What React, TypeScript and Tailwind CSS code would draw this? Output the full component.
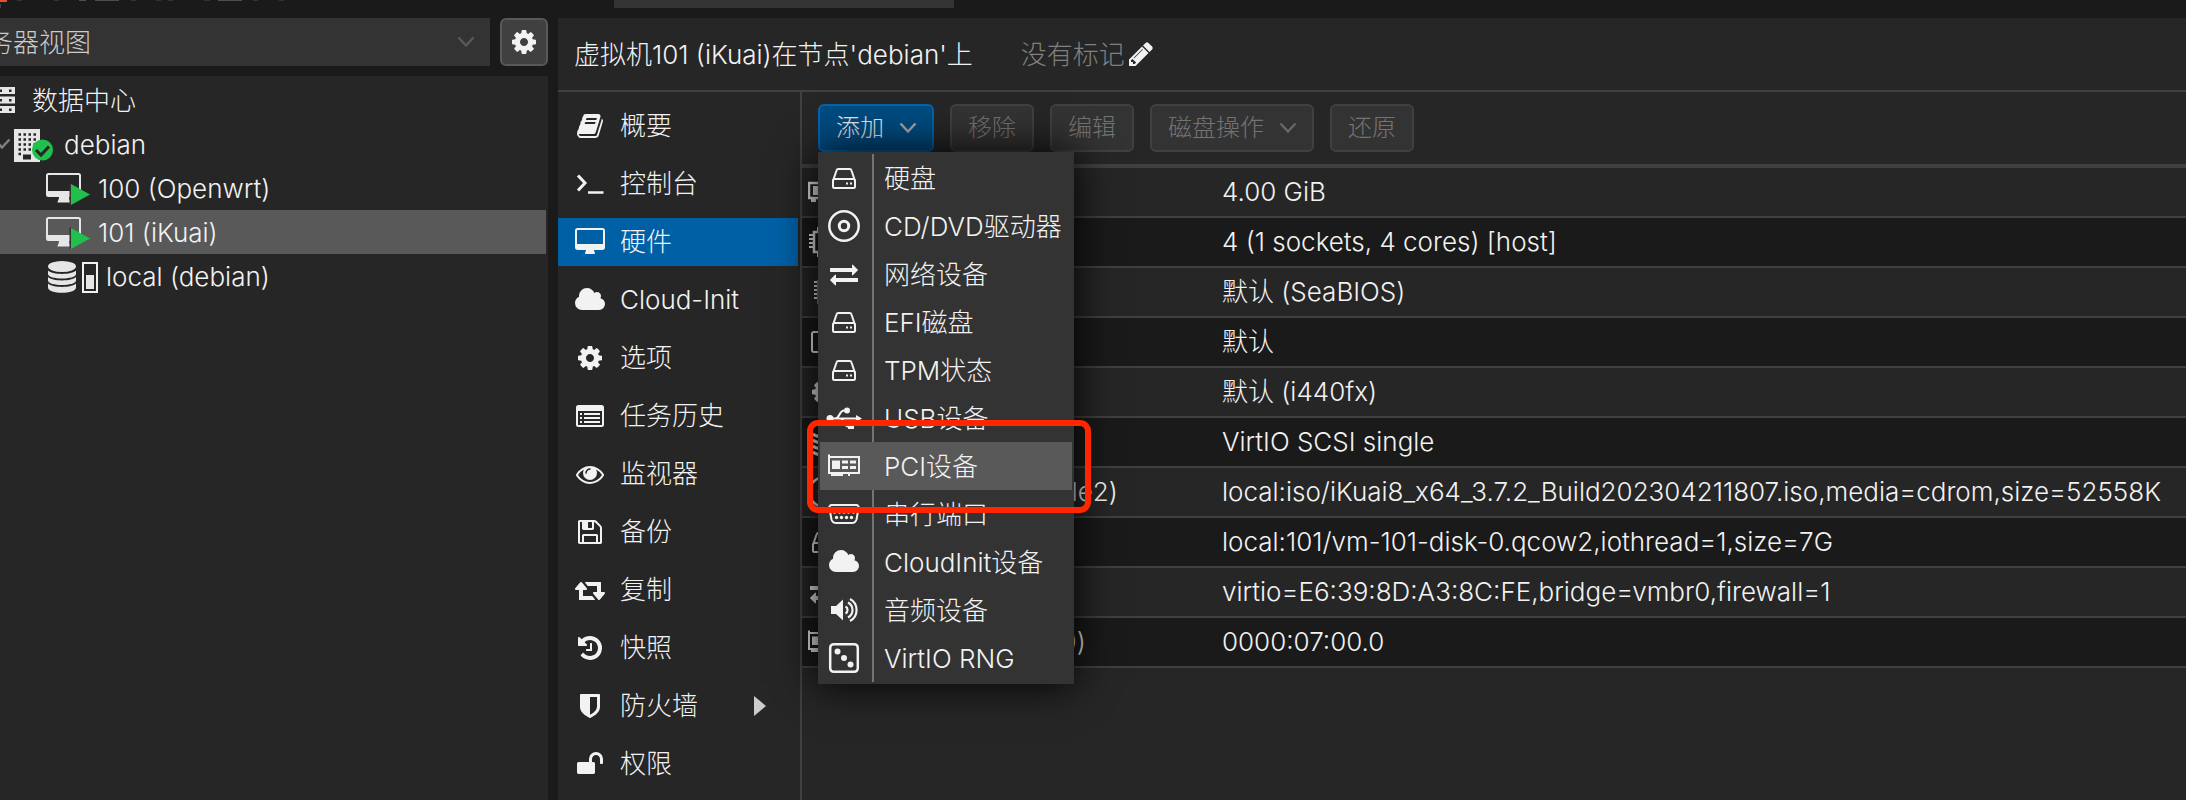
import type { ReactNode } from "react";

const COG =
  "M1152 896q0-106-75-181t-181-75-181 75-75 181 75 181 181 75 181-75 75-181zm512-109v222q0 12-8 23t-20 13l-185 28q-19 54-39 91 35 50 107 138 10 12 10 25t-9 23q-27 37-99 108t-94 71q-12 0-26-9l-138-108q-44 23-91 38-16 136-29 186-7 28-36 28h-222q-14 0-24.5-8.5t-11.5-21.5l-28-184q-49-16-90-37l-141 107q-10 9-25 9-14 0-25-11-126-114-165-168-7-10-7-23 0-12 8-23 15-21 51-66.500t54-70.500q-27-50-41-99l-183-27q-13-2-21-12.500t-8-23.500v-222q0-12 8-23t19-13l186-28q14-46 39-92-40-57-107-138-10-12-10-24 0-10 9-23 26-36 98.500-107.500t94.500-71.500q13 0 26 10l138 107q44-23 91-38 16-136 29-186 7-28 36-28h222q14 0 24.500 8.500t11.500 21.500l28 184q49 16 90 37l142-107q9-9 24-9 13 0 25 10 129 119 165 170 7 8 7 22 0 12-8 23-15 21-51 66.500t-54 70.500q26 50 41 98l183 28q13 2 21 12.500t8 23.500z";
const BOOK =
  "M1703 478q40 57 18 129l-275 906q-19 64-76.500 107.500t-122.500 43.500h-923q-77 0-148.500-53.500t-99.500-131.500q-24-67-2-127 0-4 3-27t4-37q1-8-3-21.500t-3-19.500q2-11 8-21t16.500-23.500 16.500-23.500q23-38 45-91.500t30-91.500q3-10 .5-30t-.5-28q3-11 17-28t17-23q21-36 42-92t25-90q1-9-2.500-32t.5-28q4-13 22-30.500t22-22.500q19-26 42.500-84.500t27.500-96.500q1-8-3-25.500t-2-26.500q2-8 9-18t18-23 17-21q8-12 16.500-30.500t15-35 16-36 19.500-32 26.500-23.500 36-11.500 47.500 5.500l-1 3q38-9 51-9h761q74 0 114 56t18 130l-274 906q-36 119-71.500 153.500t-128.500 34.500h-869q-27 0-38 15-11 16-1 43 24 70 144 70h923q29 0 56-15.500t35-41.500l300-987q7-22 5-57 38 15 59 43zm-1064 2q-4 13 2 22.500t20 9.500h608q13 0 25.500-9.500t16.500-22.500l21-64q4-13-2-22.500t-20-9.500h-608q-13 0-25.500 9.500t-16.500 22.500zm-83 256q-4 13 2 22.500t20 9.500h608q13 0 25.500-9.500t16.500-22.500l21-64q4-13-2-22.500t-20-9.500h-608q-13 0-25.500 9.500t-16.500 22.500z";
const DESKTOP =
  "M1856 992v-832q0-13-9.500-22.500t-22.500-9.500h-1600q-13 0-22.500 9.500t-9.500 22.500v832q0 13 9.500 22.500t22.500 9.500h1600q13 0 22.500-9.500t9.500-22.500zm128-832v1088q0 66-47 113t-113 47h-544q0 37 16 77.500t32 71 16 43.500q0 26-19 45t-45 19h-512q-26 0-45-19t-19-45q0-14 16-44t32-70 16-78h-544q-66 0-113-47t-47-113v-1088q0-66 47-113t113-47h1600q66 0 113 47t47 113z";
const CLOUD =
  "M1984 1152q0 159-112.500 271.500t-271.500 112.500h-1088q-185 0-316.500-131.500t-131.500-316.500q0-132 71-241.500t187-163.500q-2-28-2-43 0-212 150-362t362-150q158 0 286.500 88t187.500 230q70-62 166-62 106 0 181 75t75 181q0 75-41 138 129 30 213 134.500t84 239.500z";
const EYE =
  "M1664 960q-152-236-381-353 61 104 61 225 0 185-131.500 316.500t-316.500 131.500-316.500-131.500-131.500-316.500q0-121 61-225-229 117-381 353 133 205 333.500 326.500t434.500 121.500 434.500-121.500 333.500-326.500zm-720-384q0-20-14-34t-34-14q-125 0-214.500 89.500t-89.500 214.500q0 20 14 34t34 14 34-14 14-34q0-86 61-147t147-61q20 0 34-14t14-34zm848 384q0 34-20 69-140 230-376.500 368.500t-499.500 138.500-499.500-139-376.500-368q-20-35-20-69t20-69q140-229 376.500-368t499.500-139 499.500 139 376.500 368q20 35 20 69z";
const SAVE =
  "M512 1536h768v-384h-768v384zm896 0h128v-896q0-14-10-38.500t-20-34.500l-281-281q-10-10-34-20t-39-10v416q0 40-28 68t-68 28h-576q-40 0-68-28t-28-68v-416h-128v1280h128v-416q0-40 28-68t68-28h832q40 0 68 28t28 68v416zm-384-928v-320q0-13-9.500-22.500t-22.500-9.500h-192q-13 0-22.500 9.500t-9.500 22.500v320q0 13 9.500 22.500t22.500 9.500h192q13 0 22.500-9.500t9.500-22.500zm640 32v928q0 40-28 68t-68 28h-1344q-40 0-68-28t-28-68v-1344q0-40 28-68t68-28h928q40 0 88 20t76 48l280 280q28 28 48 76t20 88z";
const RETWEET =
  "M1280 1504q0 13-9.500 22.500t-22.500 9.500h-960q-8 0-13.500-2t-9-7-5.500-8-3-11.500-1-11.500v-600h-192q-26 0-45-19t-19-45q0-24 15-41l320-384q19-22 49-22t49 22l320 384q15 17 15 41 0 26-19 45t-45 19h-192v384h576q16 0 25 11l160 192q7 11 7 21zm640-416q0 24-15 41l-320 384q-20 23-49 23t-49-23l-320-384q-15-17-15-41 0-26 19-45t45-19h192v-384h-576q-16 0-25-12l-160-192q-7-9-7-20 0-13 9.500-22.500t22.500-9.500h960q8 0 13.500 2t9 7 5.500 8 3 11.500 1 11.500v600h192q26 0 45 19t19 45z";
const HISTORY =
  "M1664 896q0 156-61 298t-164 245-245 164-298 61q-172 0-327-72.500t-264-204.500q-7-10-6.500-22.500t8.500-20.500l137-138q10-9 25-9 16 2 23 12 73 95 179 147t225 52q104 0 198.500-40.500t163.500-109.500 109.500-163.500 40.500-198.500-40.500-198.500-109.500-163.500-163.500-109.500-198.500-40.500q-98 0-188 35.500t-160 101.500l137 138q31 30 14 69-17 40-59 40h-448q-26 0-45-19t-19-45v-448q0-42 40-59 39-17 69 14l130 129q107-101 244.500-156.500t284.500-55.500q156 0 298 61t245 164 164 245 61 298zm-640-288v448q0 14-9 23t-23 9h-320q-14 0-23-9t-9-23v-64q0-14 9-23t23-9h224v-352q0-14 9-23t23-9h64q14 0 23 9t9 23z";
const SHIELD =
  "M1344 960v-640h-448v1137q119-63 213-137 235-184 235-360zm192-768v768q0 86-33.500 170.500t-83 150-118 127.500-126.500 103-121 77.500-89.500 49.500-42.500 20q-12 6-26 6t-26-6q-16-7-42.500-20t-89.500-49.500-121-77.500-126.500-103-118-127.500-83-150-33.500-170.500v-768q0-26 19-45t45-19h1152q26 0 45 19t19 45z";
const UNLOCK =
  "M1728 576v256q0 26-19 45t-45 19h-64q-26 0-45-19t-19-45v-256q0-106-75-181t-181-75-181 75-75 181v192h96q40 0 68 28t28 68v576q0 40-28 68t-68 28h-960q-40 0-68-28t-28-68v-576q0-40 28-68t68-28h672v-192q0-185 131.500-316.500t316.500-131.500 316.500 131.500 131.500 316.500z";
const PENCIL =
  "M491 1536l91-91-235-235-91 91v107h128v128h107zm523-928q0-22-22-22-10 0-17 7l-542 542q-7 7-7 17 0 22 22 22 10 0 17-7l542-542q7-7 7-17zm-54-192l416 416-832 832h-416v-416zm683 96q0 53-37 90l-166 166-416-416 166-165q36-38 90-38 53 0 91 38l235 234q37 39 37 91z";
const EXCHANGE =
  "M1792 1184v192q0 13-9.500 22.500t-22.500 9.500h-1376v192q0 13-9.500 22.500t-22.500 9.500q-12 0-24-10l-319-320q-9-9-9-22 0-14 9-23l320-320q9-9 23-9 13 0 22.500 9.500t9.500 22.500v192h1376q13 0 22.500 9.500t9.500 22.500zm0-544q0 14-9 23l-320 320q-9 9-23 9-13 0-22.500-9.500t-9.500-22.500v-192h-1376q-13 0-22.500-9.500t-9.500-22.500v-192q0-13 9.500-22.500t22.500-9.500h1376v-192q0-14 9-23t23-9q12 0 24 10l319 319q9 9 9 23z";

/* Glyph on the 1792-unit grid; wide ones use a 1920-unit box starting at `left`. */
function Glyph({ d, wide = false, left = 0 }: { d: string; wide?: boolean; left?: number }) {
  return (
    <svg
      viewBox={`${left} 0 ${wide ? 1920 : 1792} 1792`}
      className={wide ? "h-7 w-[30px] shrink-0" : "size-7 shrink-0"}
      fill="currentColor"
      aria-hidden="true"
    >
      <path d={d} />
    </svg>
  );
}

function Svg32({ children }: { children: ReactNode }) {
  return (
    <svg viewBox="0 0 32 32" className="size-8 shrink-0" fill="none" stroke="currentColor" aria-hidden="true">
      {children}
    </svg>
  );
}

function Chevron() {
  return (
    <svg viewBox="0 0 20 20" className="size-5 shrink-0" fill="none" stroke="currentColor" strokeWidth="2.500" aria-hidden="true">
      <path d="M2.500 5.500 10 13.500l7.500-8" />
    </svg>
  );
}

const terminal = (
  <Svg32>
    <path d="M4 7.500 11 15l-7 7.500" strokeWidth="3" />
    <path d="M14 24.500h15.500" strokeWidth="2.500" />
  </Svg32>
);
const listAlt = (
  <svg viewBox="0 0 28 28" className="size-7 shrink-0" fill="currentColor" aria-hidden="true">
    <path fillRule="evenodd" d="M2.500 3h23A2.500 2.500 0 0 1 28 5.500v17a2.500 2.500 0 0 1-2.500 2.500h-23A2.500 2.500 0 0 1 0 22.500v-17A2.500 2.500 0 0 1 2.500 3zM2 9v13.500a.5.500 0 0 0 .5.500h23a.5.500 0 0 0 .5-.5V9z" />
    <path d="M4 11h2v2H4zM4 15h2v2H4zM4 19h2v2H4zM8 11h16v2H8zM8 15h16v2H8zM8 19h16v2H8z" />
  </svg>
);
const hdd = (
  <Svg32>
    <path d="M5 18.500v6a1.500 1.500 0 0 0 1.500 1.500h19a1.500 1.500 0 0 0 1.500-1.500v-6a1.500 1.500 0 0 0-1.500-1.500h-19A1.500 1.500 0 0 0 5 18.500zM5.300 18 8.500 8.500A2 2 0 0 1 10.500 7h11a2 2 0 0 1 2 1.500L26.700 18" strokeWidth="2" />
    <path d="M18 20.500h2v2h-2zM22 20.500h2v2h-2z" fill="currentColor" stroke="none" />
  </Svg32>
);
const disc = (
  <Svg32>
    <circle cx="16" cy="16" r="14.700" strokeWidth="2.500" />
    <circle cx="16" cy="16" r="4.700" strokeWidth="3" />
  </Svg32>
);
const usb = (
  <svg viewBox="0 0 36 32" className="h-8 w-9 shrink-0" fill="none" stroke="currentColor" aria-hidden="true">
    <path d="M4 16.500h27M9 16.500c5 0 4-8 9-8h4M14 16.500c5 0 4 8 8 8h4" strokeWidth="2" />
    <circle cx="4" cy="16.500" r="3.500" fill="currentColor" stroke="none" />
    <circle cx="21" cy="8.500" r="3" fill="currentColor" stroke="none" />
    <path d="M30 13l6 3.500-6 3.500zM22 22h6v5h-6z" fill="currentColor" stroke="none" />
  </svg>
);
const card = (
  <Svg32>
    <path d="M1 4.500V24M1 7h30v16H1" strokeWidth="2" />
    <path d="M4 10.500h8v8.500H4zM14 10.500h6v3h-6zM22 10.500h6v3h-6zM14 16h6v3h-6zM22 16h6v3h-6zM3 24h12v2H3zM20 24h2v2h-2z" fill="currentColor" stroke="none" />
  </Svg32>
);
const serial = (
  <Svg32>
    <path d="M4 7h24a2.500 2.500 0 0 1 2.500 3.500l-2 11a5 5 0 0 1-5 3.500h-15a5 5 0 0 1-5-3.500l-2-11A2.500 2.500 0 0 1 4 7z" strokeWidth="2" />
    <g fill="currentColor" stroke="none">
      <circle cx="6.500" cy="14" r="1.700" />
      <circle cx="11.500" cy="14" r="1.700" />
      <circle cx="16" cy="14" r="1.700" />
      <circle cx="20.500" cy="14" r="1.700" />
      <circle cx="25.500" cy="14" r="1.700" />
      <circle cx="8.500" cy="19.500" r="1.700" />
      <circle cx="13.500" cy="19.500" r="1.700" />
      <circle cx="18.500" cy="19.500" r="1.700" />
      <circle cx="23.500" cy="19.500" r="1.700" />
    </g>
  </Svg32>
);
const volume = (
  <Svg32>
    <path d="M3 12h5l7-6.500v21L8 20H3z" fill="currentColor" stroke="none" />
    <path d="M17.500 12.500a4 4 0 0 1 0 7M20 8.500a8.500 8.500 0 0 1 0 15M22 5a12.500 12.500 0 0 1 0 22" strokeWidth="2.200" />
  </Svg32>
);
const dice = (
  <Svg32>
    <rect x="2.200" y="2.200" width="27.600" height="27.600" rx="3.500" strokeWidth="2.500" />
    <g fill="currentColor" stroke="none">
      <circle cx="9.500" cy="9.500" r="3" />
      <circle cx="16" cy="16" r="3" />
      <circle cx="22.500" cy="22.500" r="3" />
    </g>
  </Svg32>
);
const memory = (
  <Svg32>
    <path d="M1 7h30v15H1z" strokeWidth="2.500" />
    <path d="M5 10h8v9H5zM17 10h8v9h-8zM3 22h5v4H3zM12 22h5v4h-5zM21 22h5v4h-5z" fill="currentColor" stroke="none" />
  </Svg32>
);
const cpu = (
  <Svg32>
    <rect x="6" y="6" width="20" height="20" strokeWidth="2.500" />
    <path d="M1 9h4M1 13h4M1 17h4M1 21h4M27 9h4M27 13h4M27 17h4M27 21h4M10 1v4M16 1v4M22 1v4M10 27v4M16 27v4M22 27v4" strokeWidth="2" />
  </Svg32>
);
const microchip = (
  <Svg32>
    <path d="M10 4h12v24H10z" fill="currentColor" />
    <path d="M6 6h3M6 10h3M6 14h3M6 18h3M6 22h3M23 6h3M23 10h3M23 14h3M23 18h3M23 22h3" strokeWidth="2" />
  </Svg32>
);
const display = (
  <Svg32>
    <rect x="4" y="6" width="24" height="20" rx="2" strokeWidth="2" />
  </Svg32>
);
const stack = (
  <Svg32>
    <path d="M5 8c5 4 17 4 22 0M5 14c5 4 17 4 22 0M5 20c5 4 17 4 22 0M5 26c5 4 17 4 22 0" strokeWidth="3" />
  </Svg32>
);

const navItems: { label: string; icon: ReactNode; active?: boolean; more?: boolean }[] = [
  { label: "概要", icon: <Glyph d={BOOK} /> },
  { label: "控制台", icon: terminal },
  { label: "硬件", icon: <Glyph d={DESKTOP} wide left={64} />, active: true },
  { label: "Cloud-Init", icon: <Glyph d={CLOUD} wide left={64} /> },
  { label: "选项", icon: <Glyph d={COG} /> },
  { label: "任务历史", icon: listAlt },
  { label: "监视器", icon: <Glyph d={EYE} /> },
  { label: "备份", icon: <Glyph d={SAVE} /> },
  { label: "复制", icon: <Glyph d={RETWEET} wide /> },
  { label: "快照", icon: <Glyph d={HISTORY} /> },
  { label: "防火墙", icon: <Glyph d={SHIELD} />, more: true },
  { label: "权限", icon: <Glyph d={UNLOCK} /> },
];

const menuItems: { label: string; icon: ReactNode; active?: boolean }[] = [
  { label: "硬盘", icon: hdd },
  { label: "CD/DVD驱动器", icon: disc },
  { label: "网络设备", icon: <Glyph d={EXCHANGE} /> },
  { label: "EFI磁盘", icon: hdd },
  { label: "TPM状态", icon: hdd },
  { label: "USB设备", icon: usb },
  { label: "PCI设备", icon: card, active: true },
  { label: "串行端口", icon: serial },
  { label: "CloudInit设备", icon: <Glyph d={CLOUD} wide left={64} /> },
  { label: "音频设备", icon: volume },
  { label: "VirtIO RNG", icon: dice },
];

const hardware: { name: string; value: string; icon: ReactNode }[] = [
  { name: "内存", value: "4.00 GiB", icon: memory },
  { name: "处理器", value: "4 (1 sockets, 4 cores) [host]", icon: cpu },
  { name: "BIOS", value: "默认 (SeaBIOS)", icon: microchip },
  { name: "显示", value: "默认", icon: display },
  { name: "机器", value: "默认 (i440fx)", icon: <Glyph d={COG} /> },
  { name: "SCSI控制器", value: "VirtIO SCSI single", icon: stack },
  {
    name: "CD/DVD驱动器 (ide2)",
    value: "local:iso/iKuai8_x64_3.7.2_Build202304211807.iso,media=cdrom,size=52558K",
    icon: disc,
  },
  { name: "硬盘 (scsi0)", value: "local:101/vm-101-disk-0.qcow2,iothread=1,size=7G", icon: hdd },
  { name: "网络设备 (net0)", value: "virtio=E6:39:8D:A3:8C:FE,bridge=vmbr0,firewall=1", icon: <Glyph d={EXCHANGE} /> },
  { name: "PCI设备 (hostpci0)", value: "0000:07:00.0", icon: card },
];

function VmIcon() {
  return (
    <svg viewBox="0 0 46 36" className="h-9 w-[46px] shrink-0" aria-hidden="true">
      <path
        fill="#e6e6e6"
        fillRule="evenodd"
        d="M2.500 3h30A2.500 2.500 0 0 1 35 5.500v19a2.500 2.500 0 0 1-2.500 2.500H23c0 2.500 1.500 4 1.500 5.500H11.500c0-1.500 1.500-3 1.500-5.500H2.500A2.500 2.500 0 0 1 0 24.500v-19A2.500 2.500 0 0 1 2.500 3zM2 5.500V21h31V5.500a.5.500 0 0 0-.5-.5h-30a.5.500 0 0 0-.5.500z"
      />
      <path fill="#333333" d="M23.500 13.500h2v21h-2z" />
      <path fill="#21bf4b" d="M25 14l19 10.500L25 35z" />
    </svg>
  );
}

function StorageIcon() {
  return (
    <svg viewBox="0 0 54 36" className="h-9 w-[54px] shrink-0" fill="#e6e6e6" aria-hidden="true">
      <ellipse cx="16" cy="8.500" rx="14" ry="5.500" />
      <path d="M2 12.500c4 4.500 24 4.500 28 0v3.500c0 6-28 6-28 0zM2 19c4 4.500 24 4.500 28 0v3.500c0 6-28 6-28 0zM2 25.500c4 4.500 24 4.500 28 0V29.500c0 7-28 7-28 0z" />
      <rect x="37" y="5" width="14" height="29" fill="none" stroke="#f2f2f2" strokeWidth="2" />
      <path d="M40 17h8v14h-8z" />
    </svg>
  );
}

function Sidebar() {
  const row = "flex h-11 w-full items-center text-left whitespace-nowrap";
  return (
    <aside className="-ml-12 flex w-[596px] shrink-0 flex-col">
      <div className="flex gap-[10px]">
        <label className="relative flex flex-1 items-center bg-[#333333]">
          <span className="sr-only">视图</span>
          <select className="h-12 w-full appearance-none bg-[#333333] pt-[2px] pl-[9px] text-[26px] font-light text-[#cccccc]">
            <option>服务器视图</option>
          </select>
          <span className="pointer-events-none absolute right-[14px] text-[#595959]">
            <Chevron />
          </span>
        </label>
        <button
          type="button"
          aria-label="设置"
          className="flex h-12 w-12 items-center justify-center rounded-md border-2 border-[#595959] bg-[#404040]"
        >
          <Glyph d={COG} />
        </button>
      </div>
      <div className="mt-[10px] flex-1 bg-[#262626] pt-[2px] pr-[2px]">
        <button type="button" className={`${row} gap-4 pl-8`}>
          <svg viewBox="0 0 32 32" className="size-8 shrink-0" fill="#e6e6e6" aria-hidden="true">
            <path
              fillRule="evenodd"
              d="M5 3h26v7H5zM5 12.500h26v7H5zM5 22h26v7H5zM25 5.500v2.500h2.500V5.500zM25 15v2.500h2.500V15zM25 24.500V27h2.500v-2.500zM9 5.500V8h9V5.500zM9 15v2.500h9V15zM9 24.500V27h9v-2.500z"
            />
          </svg>
          <span className="pt-[2px]">数据中心</span>
        </button>
        <button type="button" className={`${row} gap-[2px] pl-10`}>
          <span className="text-[#808080]">
            <Chevron />
          </span>
          <svg viewBox="0 0 40 36" className="h-9 w-10 shrink-0" aria-hidden="true">
            <path fill="#e6e6e6" d="M0 3h26v33H0z" />
            <path
              stroke="#262626"
              strokeWidth="2.500"
              strokeDasharray="2.500 2.500"
              d="M4.500 8.500h18M4.500 13.500h18M4.500 18.500h18M4.500 23.500h18M4.500 28h3"
            />
            <path fill="#262626" d="M9 28.500h8v5H9z" />
            <circle cx="28.500" cy="24" r="10.500" fill="#21bf4b" />
            <path d="M22 24l5 5 8-8.500" fill="none" stroke="#262626" strokeWidth="3" />
          </svg>
          <span className="pt-[2px] pl-2">debian</span>
        </button>
        <button type="button" className={`${row} gap-[6px] pl-[94px]`}>
          <VmIcon />
          <span className="pt-[2px]">100 (Openwrt)</span>
        </button>
        <button type="button" className={`${row} gap-[6px] bg-[#595959] pl-[94px]`}>
          <VmIcon />
          <span className="pt-[2px]">101 (iKuai)</span>
        </button>
        <button type="button" className={`${row} gap-[6px] pl-[94px]`}>
          <StorageIcon />
          <span className="pt-[2px]">local (debian)</span>
        </button>
      </div>
    </aside>
  );
}

function AddMenu() {
  return (
    <div
      role="menu"
      className="absolute top-full -left-[2px] z-10 w-64 border-2 border-[#333333] bg-[#333333] text-[26px] text-[#f2f2f2] shadow-[0_0_40px_#000000]"
    >
      {menuItems.map((item) => (
        <div key={item.label} className={item.active ? "relative bg-[#595959]" : ""}>
          <button type="button" role="menuitem" className="flex h-12 w-full items-center text-left whitespace-nowrap">
            <span
              className={
                item.active
                  ? "flex h-full w-[54px] items-center justify-center border-r-2 border-transparent pr-1"
                  : "flex h-full w-[54px] items-center justify-center border-r-2 border-[#737373] pr-1"
              }
            >
              {item.icon}
            </span>
            <span className="pt-[2px] pl-[10px]">{item.label}</span>
          </button>
          {item.active && (
            <div className="pointer-events-none absolute -top-[22px] -right-[19px] -bottom-[23px] -left-[13px] rounded-[11px] border-[6px] border-[#ff2600]" />
          )}
        </div>
      ))}
    </div>
  );
}

function Toolbar() {
  const disabled = "flex h-12 items-center rounded-md border-2 border-[#404040] bg-[#333333] text-[#737373]";
  return (
    <div className="flex gap-4 border-b-4 border-[#404040] px-4 py-3 text-2xl">
      <div className="relative">
        <button
          type="button"
          aria-haspopup="menu"
          aria-expanded="true"
          className="flex h-12 items-center gap-[14px] rounded-md border-2 border-[#0064ad] bg-[#004b80] pr-[14px] pl-4 text-[#e6e6e6]"
        >
          添加
          <span className="text-[#a6a6a6]">
            <Chevron />
          </span>
        </button>
        <div className="absolute bottom-0 left-[2px]">
          <AddMenu />
        </div>
      </div>
      <button type="button" disabled className={`${disabled} px-4`}>
        移除
      </button>
      <button type="button" disabled className={`${disabled} px-4`}>
        编辑
      </button>
      <button type="button" disabled className={`${disabled} gap-[14px] pr-[14px] pl-4`}>
        磁盘操作
        <span className="text-[#666666]">
          <Chevron />
        </span>
      </button>
      <button type="button" disabled className={`${disabled} px-4`}>
        还原
      </button>
    </div>
  );
}

export default function App() {
  return (
    <div className="flex min-h-screen flex-col overflow-hidden bg-[#1a1a1a] font-['Inter','Noto_Sans_CJK_SC',sans-serif] text-[26px] leading-8 font-light text-[#f2f2f2]">
      <header className="flex h-[18px] items-start">
        <svg viewBox="0 0 300 8" className="h-2 w-[300px]" aria-hidden="true">
          <path d="M0 0h7v2H0z" fill="#e8502e" />
          <path d="M0 4h1v4H0z" fill="#404040" />
          <path d="M17 0h5v1h-5zM54 0h5v1h-5zM131 0h5v1h-5zM156 0h5v1h-5zM168 0h5v1h-5zM204 0h6v1h-6zM253 0h5v1h-5zM279 0h5v1h-5z" fill="#333333" />
          <path d="M79 0h7v1h-7zM95 0h24v1H95zM218 0h24v1h-24z" fill="#4d4d4d" />
        </svg>
        <input aria-label="搜索" className="ml-[314px] h-2 w-[340px] bg-[#333333]" />
      </header>
      <div className="flex flex-1 gap-[10px]">
        <Sidebar />
        <main className="flex min-w-0 flex-1 flex-col bg-[#262626]">
          <div className="flex h-[74px] items-center border-b-2 border-[#404040] pl-4 whitespace-nowrap">
            <h1 className="pt-[2px]">虚拟机101 (iKuai)在节点'debian'上</h1>
            <span className="ml-12 pt-[2px] text-[#808080]">没有标记</span>
            <button type="button" aria-label="编辑标记" className="ml-[2px]">
              <Glyph d={PENCIL} />
            </button>
          </div>
          <div className="flex flex-1">
            <nav className="flex w-[244px] shrink-0 flex-col gap-[10px] border-r-2 border-[#404040] py-[10px] pr-[2px]">
              {navItems.map((item) => (
                <button
                  key={item.label}
                  type="button"
                  className={
                    item.active
                      ? "flex h-12 items-center gap-[14px] bg-[#0060a6] pl-4 text-left"
                      : "flex h-12 items-center gap-[14px] pl-4 text-left"
                  }
                >
                  <span className="flex w-8 justify-center">{item.icon}</span>
                  <span className="flex-1">{item.label}</span>
                  {item.more && (
                    <svg viewBox="0 0 12 20" className="mr-8 h-5 w-3" fill="#cccccc" aria-hidden="true">
                      <path d="M0 0l12 10L0 20z" />
                    </svg>
                  )}
                </button>
              ))}
            </nav>
            <section className="min-w-0 flex-1">
              <Toolbar />
              <table className="w-full table-fixed border-separate border-spacing-0 text-left whitespace-nowrap">
                <colgroup>
                  <col className="w-[410px]" />
                  <col />
                </colgroup>
                <tbody>
                  {hardware.map((row) => (
                    <tr key={row.name} className="h-[50px] even:bg-[#1a1a1a]">
                      <th scope="row" className="border-b-2 border-[#404040] p-0 font-light">
                        <span className="flex items-center gap-[22px] pl-[6px]">
                          <span className="flex w-8 justify-center">{row.icon}</span>
                          {row.name}
                        </span>
                      </th>
                      <td className="border-b-2 border-[#404040] p-0 pl-[10px]">{row.value}</td>
                    </tr>
                  ))}
                </tbody>
              </table>
            </section>
          </div>
        </main>
      </div>
    </div>
  );
}
